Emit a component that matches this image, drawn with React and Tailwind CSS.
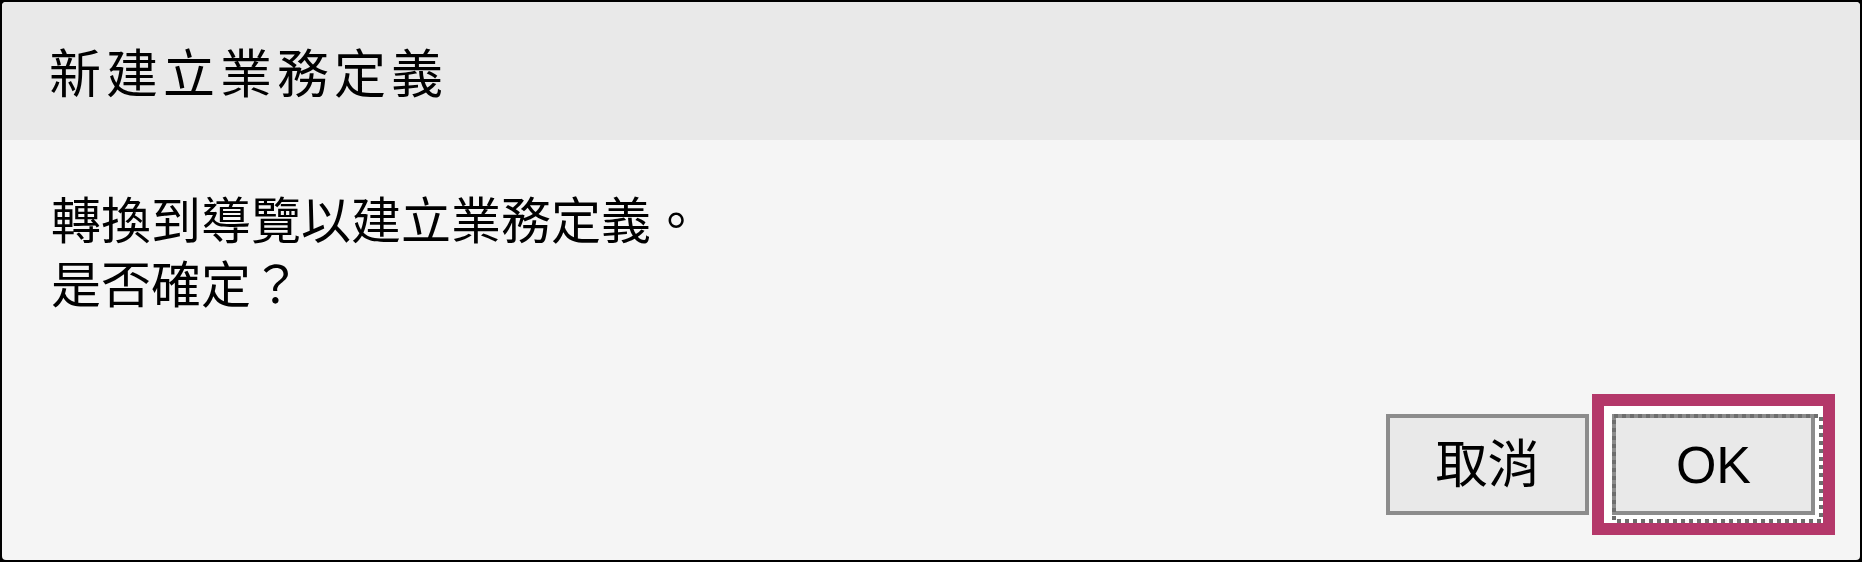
import React from 'react';

const cjk = { fontFamily: '"Noto Sans CJK TC", "Noto Sans", sans-serif' };
const btnFont = { fontFamily: '"Liberation Sans", "Noto Sans CJK TC", sans-serif' };

function FocusDots() {
  // dotted focus rectangle drawn just outside the button border
  return (
    <svg
      className="absolute -left-[4px] -top-[4px] pointer-events-none"
      width="211"
      height="109"
      viewBox="0 0 211 109"
    >
      <rect x="2" y="2" width="207" height="105" fill="none" stroke="#6e6e6e" strokeWidth="4" strokeDasharray="4 4" />
    </svg>
  );
}

export default function App() {
  return (
    <div className="w-[1862px] h-[562px] bg-black p-[2px]">
      <div className="h-full rounded-[4px] overflow-hidden flex flex-col bg-[#f5f5f5] text-black">
        <div
          className="h-[138px] shrink-0 bg-[#e9e9e9] flex items-center pl-[47px] text-[52px] tracking-[5px] leading-none"
          style={cjk}
        >
          新建立業務定義
        </div>

        <div className="flex-1 flex flex-col justify-between">
          <div className="pt-[45px] pl-[49px] text-[50px] leading-[64px]" style={cjk}>
            <div>轉換到導覽以建立業務定義。</div>
            <div>是否確定？</div>
          </div>

          <div className="flex justify-end gap-[23px] pr-[45px] pb-[45px]">
            <button
              className="w-[203px] h-[101px] border-[4px] border-[#8c8c8c] bg-[#e9e9e9] text-[52px] leading-none flex items-center justify-center"
              style={btnFont}
            >
              取消
            </button>
            <button
              className="relative w-[203px] h-[101px] border-[4px] border-[#8c8c8c] bg-[#e9e9e9] text-[52px] leading-none flex items-center justify-center shadow-[0_0_0_8px_#ffffff,0_0_0_20px_#b4386a]"
              style={btnFont}
            >
              <FocusDots />
              OK
            </button>
          </div>
        </div>
      </div>
    </div>
  );
}
